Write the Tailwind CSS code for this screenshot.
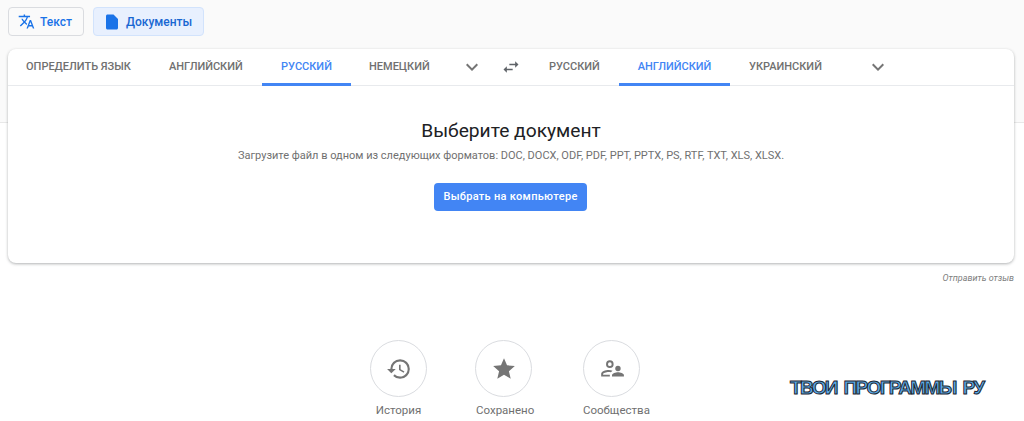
<!DOCTYPE html>
<html lang="ru">
<head>
    <meta charset="UTF-8">
    <title>Переводчик</title>
    <script src="https://cdn.jsdelivr.net/npm/@tailwindcss/browser@4"></script>
</head>
<body class="relative h-[421px] w-[1024px] overflow-hidden bg-white font-['Roboto',sans-serif]">
    <!-- Grey header band -->
    <div class="h-[123px] border-b border-[#e8e8e8] bg-[#fafafa] px-2 pt-[7px]">
        <div class="flex gap-[9px]">
            <button class="flex h-[29px] w-[76px] items-center gap-[5px] rounded border border-[#dadce0] bg-[#fafafa] pl-[9px] text-[12px] font-medium text-[#1a73e8]">
                <svg class="h-[17px] w-[17px]" viewBox="0 0 24 24" fill="#1a73e8"><path d="M12.87 15.07l-2.54-2.51.03-.03A17.52 17.52 0 0 0 14.07 6H17V4h-7V2H8v2H1v1.99h11.17C11.5 7.92 10.44 9.75 9 11.35 8.07 10.32 7.3 9.19 6.69 8h-2c.73 1.63 1.73 3.17 2.98 4.56l-5.09 5.02L4 19l5-5 3.11 3.11.76-2.04zM18.5 10h-2L12 22h2l1.12-3h4.75L21 22h2l-4.500-12zm-2.620 7l1.620-4.330L19.120 17h-3.240z"/></svg>
                Текст
            </button>
            <button class="flex h-[29px] w-[111px] items-center gap-[5px] rounded border border-[#d2e3fc] bg-[#e8f0fe] pl-[9px] text-[12px] font-medium text-[#1967d2]">
                <svg class="h-[18px] w-[18px]" viewBox="0 0 24 24" fill="#1a73e8"><path d="M14 2H6c-1.100 0-2 .9-2 2v16c0 1.100.9 2 2 2h12c1.100 0 2-.9 2-2V8l-6-6z"/></svg>
                Документы
            </button>
        </div>
    </div>

    <!-- Translator card -->
    <div class="absolute top-[49px] left-2 h-[214px] w-[1006px] rounded-lg bg-white shadow-[0_1px_3px_rgba(60,64,67,0.4)]">
        <div class="flex h-[37px] items-stretch border-b border-[#e8eaed] text-[11px] font-medium text-[#707070]">
            <div class="flex w-[142px] items-center pl-[18px]">ОПРЕДЕЛИТЬ ЯЗЫК</div>
            <div class="flex w-[112px] items-center pl-[19px]">АНГЛИЙСКИЙ</div>
            <div class="-mb-px flex w-[89px] items-center justify-center border-b-[3px] border-[#4285f4] pt-[3px] text-[#4285f4]">РУССКИЙ</div>
            <div class="flex w-[96px] items-center pl-[18px]">НЕМЕЦКИЙ</div>
            <div class="flex w-[50px] items-center justify-center">
                <svg class="h-6 w-6" viewBox="0 0 24 24" fill="#757575"><path d="M16.590 8.590 12 13.170 7.410 8.590 6 10l6 6 6-6z"/></svg>
            </div>
            <div class="flex w-[28px] items-center justify-center">
                <svg class="h-5 w-5" viewBox="0 0 24 24" fill="#5f6368"><path d="M6.990 11 3 15l3.990 4v-3H14v-2H6.990v-3zM21 9l-3.990-4v3H10v2h7.010v3L21 9z"/></svg>
            </div>
            <div class="flex w-[94px] items-center pl-[24px]">РУССКИЙ</div>
            <div class="-mb-px flex w-[111px] items-center justify-center border-b-[3px] border-[#4285f4] pt-[3px] text-[#4285f4]">АНГЛИЙСКИЙ</div>
            <div class="flex w-[110px] items-center pl-[19px]">УКРАИНСКИЙ</div>
            <div class="flex w-[76px] items-center justify-center">
                <svg class="h-6 w-6" viewBox="0 0 24 24" fill="#757575"><path d="M16.590 8.590 12 13.170 7.410 8.590 6 10l6 6 6-6z"/></svg>
            </div>
        </div>
        <div class="flex flex-col items-center pt-[32px]">
            <h1 class="text-[19.200px] leading-[26px] text-[#202124]">Выберите документ</h1>
            <p class="mt-[4px] text-[11px] leading-4 text-[#707070]">Загрузите файл в одном из следующих форматов: DOC, DOCX, ODF, PDF, PPT, PPTX, PS, RTF, TXT, XLS, XLSX.</p>
            <button class="mt-[19px] mr-px h-[28px] w-[153px] rounded bg-[#4285f4] text-[11px] font-medium tracking-[0.3px] text-white">Выбрать на компьютере</button>
        </div>
    </div>

    <!-- Feedback link -->
    <div class="absolute top-[272px] right-[10px] text-[9px] italic text-[#808080]">Отправить отзыв</div>

    <!-- Bottom shortcuts -->
    <div class="absolute top-[340px] left-[370px] flex">
        <div class="flex w-[57px] flex-col items-center">
            <div class="flex h-[57px] w-[57px] items-center justify-center rounded-full border border-[#dadce0]">
                <svg class="h-[26px] w-[26px]" viewBox="0 0 24 24" fill="#757575"><path d="M13 3a9 9 0 0 0-9 9H1l3.890 3.890.07.140L9 12H6c0-3.870 3.130-7 7-7s7 3.130 7 7-3.130 7-7 7c-1.930 0-3.680-.79-4.940-2.060l-1.420 1.420A8.954 8.954 0 0 0 13 21a9 9 0 0 0 0-18zm-1 5v5l4.280 2.540.72-1.210-3.500-2.080V8H12z"/></svg>
            </div>
            <span class="mt-[5px] whitespace-nowrap text-[11.500px] leading-4 text-[#707070]">История</span>
        </div>
        <div class="ml-[48px] flex w-[57px] flex-col">
            <div class="flex h-[57px] w-[57px] items-center justify-center rounded-full border border-[#dadce0]">
                <svg class="h-[26px] w-[26px]" viewBox="0 0 24 24" fill="#757575"><path d="M12 17.270 18.180 21l-1.640-7.030L22 9.240l-7.190-.61L12 2 9.190 8.630 2 9.240l5.460 4.730L5.820 21z"/></svg>
            </div>
            <span class="mt-[5px] ml-px whitespace-nowrap text-[11.500px] leading-4 text-[#707070]">Сохранено</span>
        </div>
        <div class="ml-[51px] flex w-[57px] flex-col">
            <div class="flex h-[57px] w-[57px] items-center justify-center rounded-full border border-[#dadce0]">
                <svg class="h-[26px] w-[26px]" viewBox="0 0 24 24" fill="#757575"><path d="M10 4a3.500 3.500 0 1 0 0 7 3.500 3.500 0 0 0 0-7zm0 1.800a1.700 1.700 0 1 1 0 3.400 1.700 1.700 0 0 1 0-3.400zM9 13c-3 0-7 1.400-7 3.600V19h8v-1.800H3.800v-.6c0-.7 2.700-1.800 5.200-1.800.7 0 1.400.1 2 .2l1.500-1.400C11.400 13.200 10 13 9 13z"/><circle cx="17.500" cy="11.500" r="2.500"/><path d="M17.500 15c-2 0-5.500 1-5.500 2.600V19h11v-1.400c0-1.600-3.500-2.600-5.500-2.600z"/></svg>
            </div>
            <span class="mt-[5px] whitespace-nowrap text-[11.500px] leading-4 text-[#707070]">Сообщества</span>
        </div>
    </div>

    <!-- Watermark over the page -->
    <div class="absolute top-[378px] left-[790px] whitespace-nowrap font-['Liberation_Sans',sans-serif] text-[19px] font-bold leading-5 tracking-[-1.600px] text-[#5aaae8] [-webkit-text-stroke:1px_#1c2733] [word-spacing:3px]">ТВОИ ПРОГРАММЫ РУ</div>
</body>
</html>
